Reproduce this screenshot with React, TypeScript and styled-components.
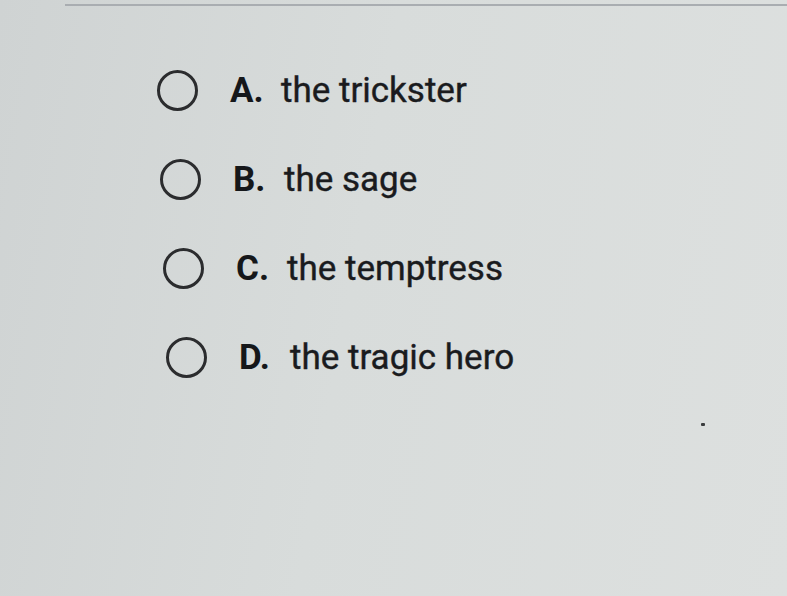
import styled, { createGlobalStyle } from "styled-components";

interface Choice {
    letter: string;
    text: string;
}

const choices: Choice[] = [
    { letter: "A.", text: "the trickster" },
    { letter: "B.", text: "the sage" },
    { letter: "C.", text: "the temptress" },
    { letter: "D.", text: "the tragic hero" },
];

export default function App() {
    return (
        <>
            <GlobalStyle />
            <Page>
                <Divider />
                <List>
                    {choices.map((c, idx) => (
                        <Row key={c.letter} $shift={idx * 3}>
                            <Radio />
                            <Letter>{c.letter}</Letter>
                            <Answer>{c.text}</Answer>
                        </Row>
                    ))}
                </List>
                <Speck />
            </Page>
        </>
    );
}

const GlobalStyle = createGlobalStyle`
    html, body {
        margin: 0;
        padding: 0;
        background: #d8dcdb;
    }
`;

const Page = styled.div`
    position: relative;
    width: 787px;
    height: 596px;
    overflow: hidden;
    background: linear-gradient(100deg, #cfd3d3 0%, #d8dcdb 45%, #dde0df 100%);
    font-family: Roboto, "Liberation Sans", sans-serif;
    color: #1d1e20;
`;

const Divider = styled.div`
    margin: 4px 0 0 65px;
    height: 2px;
    background: #a9adb1;
`;

const List = styled.ul`
    list-style: none;
    margin: 0;
    padding: 40px 0 0 157px;
    display: flex;
    flex-direction: column;
`;

const Row = styled.li<{ $shift: number }>`
    display: flex;
    align-items: center;
    height: 89px;
    margin-left: ${(p) => p.$shift}px;
`;

const Radio = styled.span`
    width: 35px;
    height: 35px;
    border: 3px solid #2b2c2e;
    border-radius: 50%;
    flex-shrink: 0;
`;

const Letter = styled.span`
    margin-left: 32px;
    width: 51px;
    font-size: 35px;
    font-weight: 700;
    color: #15171a;
`;

const Answer = styled.span`
    font-size: 35px;
    font-weight: 400;
    color: #1a1b1e;
    -webkit-text-stroke: 0.4px #1a1b1e;
`;

const Speck = styled.span`
    position: absolute;
    left: 701px;
    top: 423px;
    width: 4px;
    height: 3px;
    border-radius: 1px;
    background: #3a3c3e;
`;
